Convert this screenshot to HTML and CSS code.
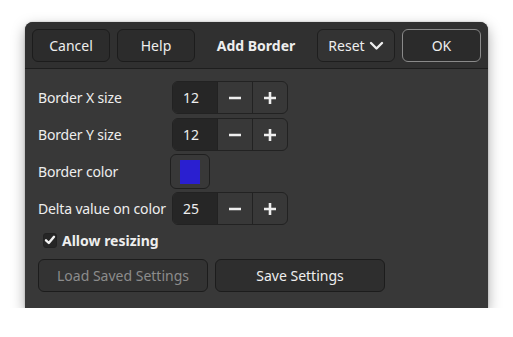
FILE: index.html
```html
<!DOCTYPE html>
<html>
<head>
<meta charset="utf-8">
<link rel="stylesheet" href="styles.css">
</head>
<body>
<div class="dialog">
  <div class="header">
    <button class="btn hbtn">Cancel</button>
    <button class="btn hbtn">Help</button>
    <div class="title">Add Border</div>
    <button class="btn hbtn reset">Reset
      <svg class="chev" width="15" height="10" viewBox="0 0 15 10"><path d="M2 2 L7.5 7.5 L13 2" fill="none" stroke="#eeeeee" stroke-width="2.4" stroke-linecap="round" stroke-linejoin="round"/></svg>
    </button>
    <button class="btn hbtn ok">OK</button>
  </div>
  <div class="body">
    <div class="grid">
      <div class="label">Border X size</div>
      <div class="spin">
        <div class="entry">12</div>
        <div class="sbtn"><svg width="14" height="14" viewBox="0 0 14 14"><path d="M1 7 H13" stroke="#eee" stroke-width="2.6"/></svg></div>
        <div class="sbtn"><svg width="14" height="14" viewBox="0 0 14 14"><path d="M1 7 H13 M7 1 V13" stroke="#eee" stroke-width="2.6"/></svg></div>
      </div>
      <div class="label">Border Y size</div>
      <div class="spin">
        <div class="entry">12</div>
        <div class="sbtn"><svg width="14" height="14" viewBox="0 0 14 14"><path d="M1 7 H13" stroke="#eee" stroke-width="2.6"/></svg></div>
        <div class="sbtn"><svg width="14" height="14" viewBox="0 0 14 14"><path d="M1 7 H13 M7 1 V13" stroke="#eee" stroke-width="2.6"/></svg></div>
      </div>
      <div class="label">Border color</div>
      <div class="colorbtn"><div class="swatch"></div></div>
      <div class="label">Delta value on color</div>
      <div class="spin">
        <div class="entry">25</div>
        <div class="sbtn"><svg width="14" height="14" viewBox="0 0 14 14"><path d="M1 7 H13" stroke="#eee" stroke-width="2.6"/></svg></div>
        <div class="sbtn"><svg width="14" height="14" viewBox="0 0 14 14"><path d="M1 7 H13 M7 1 V13" stroke="#eee" stroke-width="2.6"/></svg></div>
      </div>
    </div>
    <div class="check">
      <div class="box"><svg width="12" height="12" viewBox="0 0 12 12"><path d="M2 6.3 L4.8 9 L10 2.8" fill="none" stroke="#f2f2f2" stroke-width="2.4" stroke-linecap="round" stroke-linejoin="round"/></svg></div>
      <span class="checklabel">Allow resizing</span>
    </div>
    <div class="actions">
      <button class="btn wide disabled">Load Saved Settings</button>
      <button class="btn wide">Save Settings</button>
    </div>
  </div>
</div>
</body>
</html>
```

FILE: styles.css
```css
html, body {
  margin: 0;
  padding: 0;
  background: #ffffff;
}
body {
  font-family: "Noto Sans", "DejaVu Sans", sans-serif;
  font-size: 14px;
  color: #eeeeee;
  padding: 22px 0 0 25px;
}
.dialog {
  width: 463px;
  height: 286px;
  background: #383838;
  border-radius: 8px 8px 0 0;
  box-shadow: 0 5px 14px rgba(0, 0, 0, 0.34), 0 0 2px rgba(0, 0, 0, 0.25);
  display: flex;
  flex-direction: column;
}
.header {
  height: 47px;
  box-sizing: border-box;
  background: #303030;
  border-radius: 8px 8px 0 0;
  border-bottom: 1px solid #1e1e1e;
  display: flex;
  align-items: center;
  padding: 0 7px;
  gap: 7px;
}
.btn {
  font-family: inherit;
  font-size: 14px;
  color: #eeeeee;
  height: 33px;
  box-sizing: border-box;
  border-radius: 6px;
  border: 1px solid #1c1c1c;
  background: #2c2c2c;
  padding: 0;
  display: flex;
  align-items: center;
  justify-content: center;
}
.hbtn {
  width: 78px;
}
.title {
  flex: 1;
  text-align: center;
  font-weight: bold;
  font-size: 14px;
}
.reset {
  gap: 4px;
  background: #333333;
  border-color: #1e1e1e;
}
.chev {
  margin-top: 1px;
}
.ok {
  width: 79px;
  border-color: #8a8a8a;
  background: #2b2b2b;
}
.body {
  padding: 12px 13px 0 13px;
}
.grid {
  display: grid;
  grid-template-columns: 128px auto;
  justify-content: start;
  column-gap: 6px;
  row-gap: 4px;
  align-items: center;
}
.label {
  white-space: nowrap;
  letter-spacing: -0.15px;
}
.spin {
  width: 116px;
  height: 33px;
  box-sizing: border-box;
  border: 1px solid #222222;
  border-radius: 6px;
  display: flex;
  overflow: hidden;
  background: #383838;
}
.entry {
  width: 44px;
  background: #262626;
  display: flex;
  align-items: center;
  padding-left: 10px;
  box-sizing: border-box;
}
.sbtn {
  flex: 1;
  border-left: 1px solid #222222;
  display: flex;
  align-items: center;
  justify-content: center;
}
.colorbtn {
  width: 40px;
  height: 35px;
  box-sizing: border-box;
  border: 1px solid #1f1f1f;
  border-radius: 6px;
  display: flex;
  align-items: center;
  justify-content: center;
  margin: -1px 0 -1px -2px;
}
.swatch {
  width: 20px;
  height: 24px;
  background: #2a1fd0;
}
.check {
  display: flex;
  align-items: center;
  gap: 5px;
  margin-top: 7px;
  margin-left: 5px;
  height: 16px;
}
.box {
  width: 14px;
  height: 15px;
  box-sizing: border-box;
  background: #262626;
  border: 1px solid #222;
  border-radius: 3px;
  display: flex;
  align-items: center;
  justify-content: center;
}
.checklabel {
  font-weight: bold;
}
.actions {
  display: flex;
  gap: 7px;
  margin-top: 11px;
}
.wide {
  width: 170px;
  background: #2e2e2e;
}
.disabled {
  color: #8c8c8c;
  background: #333333;
}
```
